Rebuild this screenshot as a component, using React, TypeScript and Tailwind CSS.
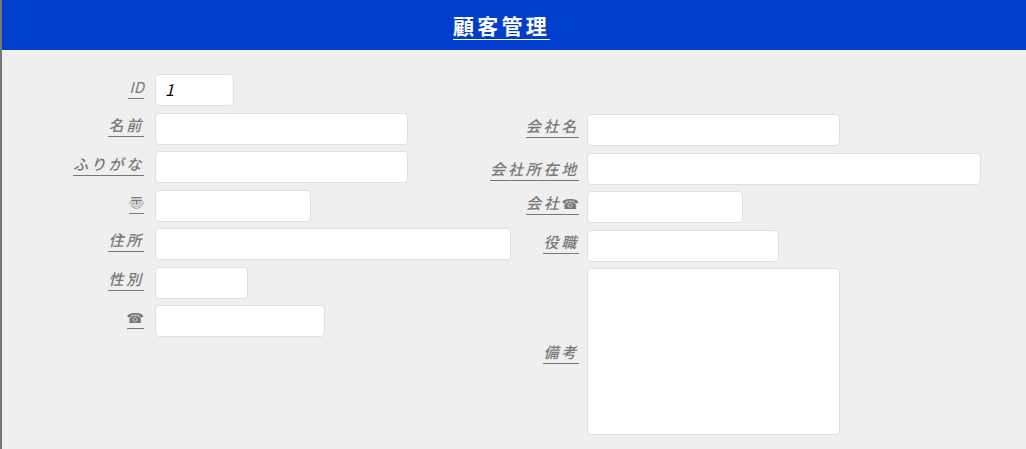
import type { ReactNode } from "react";

const font = "font-['Noto_Sans_CJK_JP','DejaVu_Sans',sans-serif]";

function Phone() {
  return <span className="font-['DejaVu_Sans'] text-[14px] leading-[22px] tracking-normal not-italic font-bold">☎</span>;
}

function Label({ children, className = "" }: { children: ReactNode; className?: string }) {
  return (
    <label
      className={
        "h-[24px] border-b border-[#777] text-[15px] leading-[23px] font-medium tracking-[2.75px] text-[#777] italic whitespace-nowrap " +
        className
      }
    >
      {children}
    </label>
  );
}

function Field({ width, value }: { width: string; value?: string }) {
  return (
    <input
      readOnly
      defaultValue={value}
      className={
        "h-8 rounded-[4px] border border-[#e0e0e0] bg-white px-[9px] pb-[3px] text-[16px] italic text-black outline-none " +
        width
      }
    />
  );
}

const leftRows: { key: string; label: ReactNode; width: string; value?: string; cls?: string }[] = [
  { key: "id", label: "ID", width: "w-[79px]", value: "1", cls: "mt-px text-[14px] font-normal tracking-normal pl-px" },
  { key: "name", label: "名前", width: "w-[253px]" },
  { key: "kana", label: "ふりがな", width: "w-[253px]", cls: "mt-px" },
  { key: "zip", label: <span className="not-italic text-[15px] tracking-normal">〠</span>, width: "w-[156px]" },
  { key: "addr", label: "住所", width: "w-[356px]" },
  { key: "sex", label: "性別", width: "w-[93px]" },
  { key: "tel", label: <Phone />, width: "w-[170px]" },
];

const rightRows: { key: string; label: ReactNode; width: string; cls?: string }[] = [
  { key: "co", label: "会社名", width: "w-[253px]" },
  { key: "coaddr", label: "会社所在地", width: "w-[394px]", cls: "mt-[4px]" },
  { key: "cotel", label: <>会社<Phone /></>, width: "w-[156px]" },
  { key: "role", label: "役職", width: "w-[192px]" },
];

export default function App() {
  return (
    <div lang="ja" className={"min-h-[449px] border-l-2 border-[#777] bg-[#efefef] " + font}>
      <header className="flex h-[50px] justify-center bg-[#003ecb] pt-[12px] pr-[25px]">
        <h1 className="h-[28px] border-b border-white text-[21px] leading-[27px] font-bold tracking-[3.25px] text-white">
          顧客管理
        </h1>
      </header>
      <form className="flex">
        <div className="flex w-[509px] flex-col gap-[6.5px] pt-6">
          {leftRows.map((r) => (
            <div key={r.key} className="flex items-start gap-[11px]">
              <div className="flex w-[142px] justify-end">
                <Label className={r.cls}>{r.label}</Label>
              </div>
              <Field width={r.width} value={r.value} />
            </div>
          ))}
        </div>
        <div className="-ml-[30px] flex flex-col gap-[6.5px] pt-16">
          {rightRows.map((r) => (
            <div key={r.key} className="flex items-start gap-2">
              <div className="flex w-[98px] justify-end">
                <Label className={r.cls}>{r.label}</Label>
              </div>
              <Field width={r.width} />
            </div>
          ))}
          <div className="flex items-center gap-2">
            <div className="flex w-[98px] justify-end">
              <Label className="mt-px">備考</Label>
            </div>
            <textarea
              readOnly
              className="h-[167px] w-[253px] resize-none rounded-[4px] border border-[#e0e0e0] bg-white outline-none"
            />
          </div>
        </div>
      </form>
    </div>
  );
}
